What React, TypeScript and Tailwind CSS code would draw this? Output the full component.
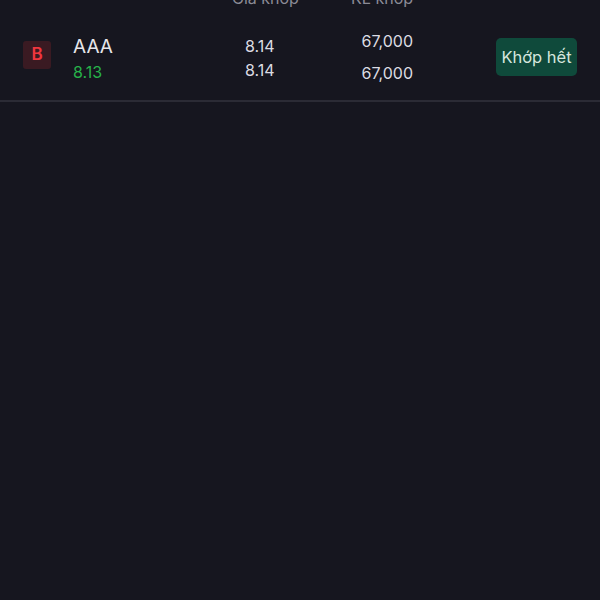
import React from 'react';

const App: React.FC = () => {
  return (
    <div className="w-[600px] h-[600px] overflow-hidden bg-[#16161f] font-['Inter',sans-serif]">
      {/* header, scrolled mostly out of view */}
      <div className="flex h-[20px] -mt-[12px] pl-[232px] text-[16px] leading-[20px] text-[#8b8b96]">
        <span className="w-[83px]">Giá khớp</span>
        <span className="w-[98px] text-right">KL khớp</span>
      </div>

      <div className="flex items-center h-[94px] pt-[2px] pl-[23px] pr-[23px] border-b-2 border-[#2b2b35]">
        <div className="w-[28px] h-[28px] rounded-[3px] bg-[#3a1a22] flex items-center justify-center text-[#f0363e] text-[17px] font-semibold">
          B
        </div>

        <div className="ml-[22px] w-[172px] flex flex-col mt-[7px]">
          <span className="text-[19px] leading-[24px] text-[#e6e6ea]">AAA</span>
          <span className="text-[16px] leading-[20px] mt-[3px] text-[#27b24a]">8.13</span>
        </div>

        <div className="w-[70px] flex flex-col text-[16px] leading-[20px] text-[#dcdce2] mt-[5px]">
          <span>8.14</span>
          <span className="mt-[4px]">8.14</span>
        </div>

        <div className="w-[98px] flex flex-col items-end text-[16px] leading-[20px] text-[#dcdce2] mt-[3px]">
          <span>67,000</span>
          <span className="mt-[12px]">67,000</span>
        </div>

        <button className="ml-auto mt-[4px] w-[81px] h-[38px] rounded-[5px] bg-[#0f4a3b] text-[#d6e6de] text-[16.5px] flex items-center justify-center">
          Khớp hết
        </button>
      </div>
    </div>
  );
};

export default App;
